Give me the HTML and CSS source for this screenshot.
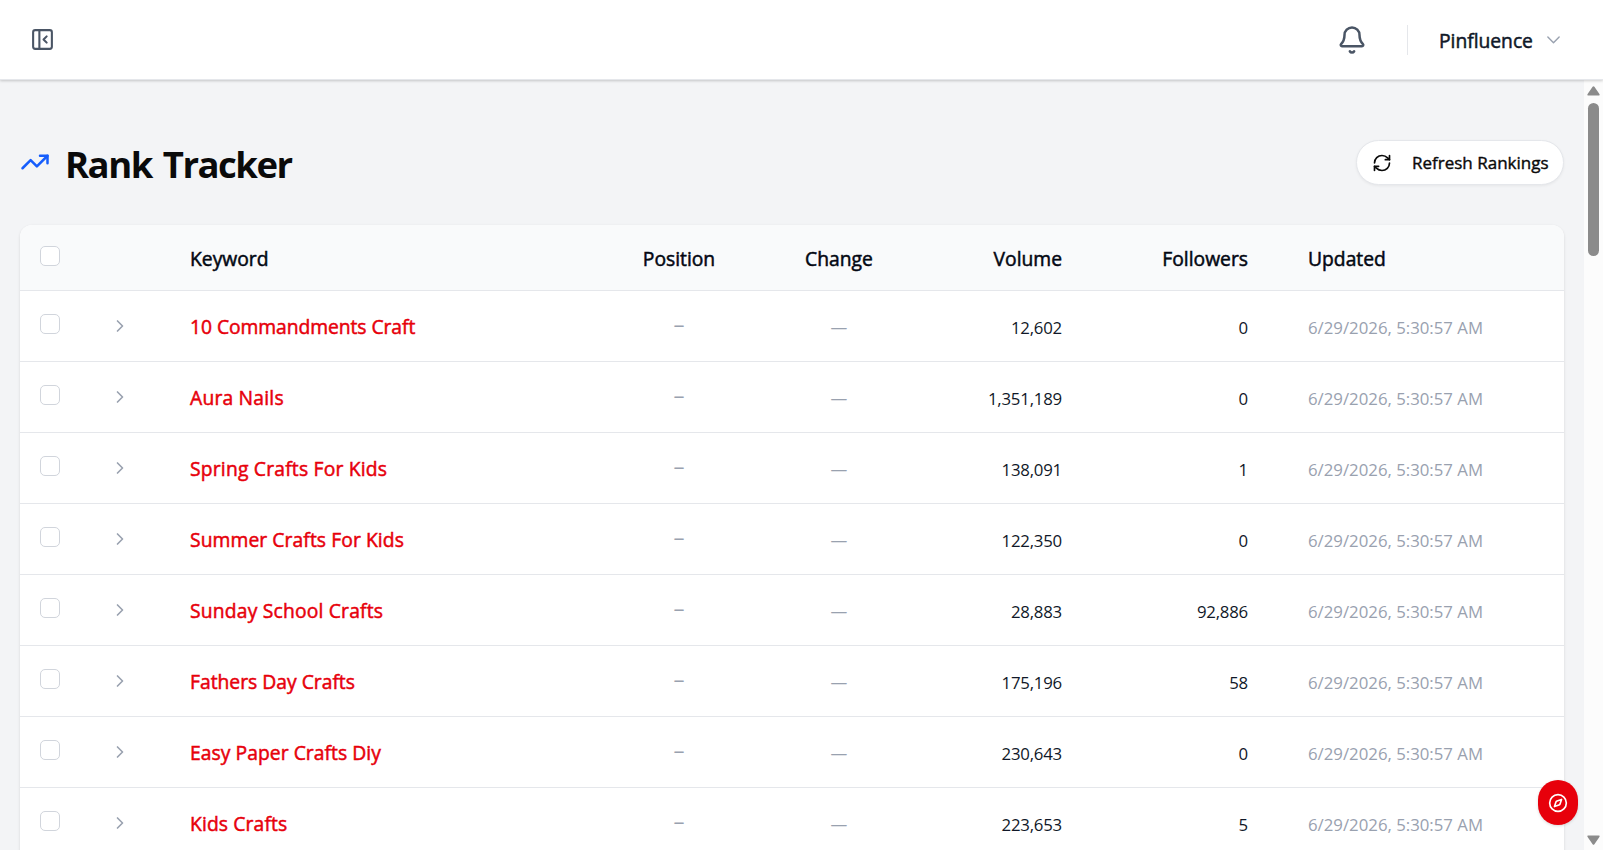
FILE: index.html
```html
<!DOCTYPE html>
<html lang="en">
<head>
<meta charset="utf-8">
<title>Rank Tracker</title>
<link rel="stylesheet" href="styles.css">
</head>
<body>
<header class="topbar">
  <svg class="icon panel-icon" viewBox="0 0 24 24"><rect x="3" y="3" width="18" height="18" rx="2"/><path d="M9 3v18"/><path d="m16 15-3-3 3-3"/></svg>
  <div class="topbar-right">
    <svg class="icon bell-icon" viewBox="0 0 24 24"><path d="M10.268 21a2 2 0 0 0 3.464 0"/><path d="M3.262 15.326A1 1 0 0 0 4 17h16a1 1 0 0 0 .74-1.673C19.41 13.956 18 12.499 18 8A6 6 0 0 0 6 8c0 4.499-1.411 5.956-2.738 7.326"/></svg>
    <span class="divider"></span>
    <span class="account">Pinfluence</span>
    <svg class="icon caret-icon" viewBox="0 0 12 7"><path d="m.8.8 5.2 5.2L11.2.8"/></svg>
  </div>
</header>
<div class="body">
  <main class="main">
    <div class="page-head">
      <svg class="icon trend-icon" viewBox="0 0 24 24"><path d="M16 7h6v6"/><path d="m22 7-8.5 8.5-5-5L2 17"/></svg>
      <h1 class="title">Rank Tracker</h1>
      <button class="refresh">
        <svg class="icon refresh-icon" viewBox="0 0 24 24"><path d="M3 12a9 9 0 0 1 9-9 9.75 9.75 0 0 1 6.74 2.74L21 8"/><path d="M21 3v5h-5"/><path d="M21 12a9 9 0 0 1-9 9 9.75 9.75 0 0 1-6.74-2.74L3 16"/><path d="M8 16H3v5"/></svg>
        <span>Refresh Rankings</span>
      </button>
    </div>
    <section class="card" id="card">
      <div class="row head">
        <span class="check"></span><span></span><span class="kw">Keyword</span><span class="mid">Position</span><span class="mid">Change</span><span class="num">Volume</span><span class="num">Followers</span><span class="upd">Updated</span>
      </div>
    </section>
  </main>
  <div class="scrollbar">
    <svg class="arrow" viewBox="0 0 13 10"><path d="M5.6.8.6 8c-.5.9-.2 1.500.7 1.500h10.400c.9 0 1.200-.6.7-1.500L7.400.8c-.5-.7-1.300-.7-1.800 0z"/></svg>
    <span class="thumb"></span>
    <svg class="arrow down" viewBox="0 0 13 10"><path d="M5.6.8.6 8c-.5.9-.2 1.500.7 1.500h10.400c.9 0 1.200-.6.7-1.500L7.400.8c-.5-.7-1.300-.7-1.800 0z"/></svg>
  </div>
</div>
<button class="fab" aria-label="Explore"><svg class="icon" viewBox="0 0 24 24"><circle cx="12" cy="12" r="10"/><path d="m16.24 7.76-1.804 5.411a2 2 0 0 1-1.265 1.265L7.760 16.240l1.804-5.411a2 2 0 0 1 1.265-1.265z"/></svg></button>
<script src="rows.js"></script>
</body>
</html>
```
FILE: styles.css
```css
* { box-sizing: border-box; }
body {
  margin: 0;
  height: 850px;
  overflow: hidden;
  display: flex;
  flex-direction: column;
  background: #f3f4f6;
  font-family: "Segoe UI", "Open Sans", "Noto Sans", sans-serif;
  color: #030712;
}
.icon {
  display: block;
  flex: none;
  fill: none;
  stroke: currentColor;
  stroke-width: 2;
  stroke-linecap: round;
  stroke-linejoin: round;
}
.topbar {
  position: relative;
  z-index: 1;
  flex: none;
  height: 80px;
  padding: 0 43px 0 30px;
  display: flex;
  align-items: center;
  justify-content: space-between;
  background: #fff;
  border-bottom: 1px solid #e5e7eb;
  box-shadow: 0 1px 3px rgba(0, 0, 0, .12), 0 1px 2px rgba(0, 0, 0, .08);
  color: #4a5565;
}
.panel-icon { width: 25px; height: 25px; }
.topbar-right { display: flex; align-items: center; }
.bell-icon { width: 30px; height: 30px; }
.divider { width: 1px; height: 30px; margin: 0 31px 0 40px; background: #e5e7eb; }
.account {
  width: 94px;
  margin-right: 14px;
  padding-top: 2px;
  font-size: 19.3px;
  line-height: 30px;
  letter-spacing: -.03px;
  -webkit-text-stroke: .5px currentColor;
  color: #101828;
  white-space: nowrap;
}
.caret-icon { width: 13px; height: 8px; stroke-width: 1.3; color: #99a1af; }
.body { flex: 1; min-height: 0; display: flex; }
.main { flex: 1; min-width: 0; padding: 60px 20px 0; overflow: hidden; }
.page-head { display: flex; align-items: center; height: 45px; margin-bottom: 40px; }
.trend-icon { width: 30px; height: 30px; margin: -1px 15px 0 0; color: #155dfc; }
.title {
  margin: 0;
  padding-top: 3px;
  font-size: 36.5px;
  font-weight: 700;
  line-height: 45px;
  letter-spacing: -1.5px;
  word-spacing: 3px;
  color: #0a0a0a;
  white-space: nowrap;
}
.refresh {
  display: flex;
  align-items: center;
  width: 208px;
  height: 45px;
  margin-left: auto;
  padding: 0 0 0 15px;
  gap: 20px;
  border: 1px solid #e5e7eb;
  border-radius: 23px;
  background: #fff;
  box-shadow: 0 1px 3px rgba(0, 0, 0, .06);
  font: 400 17px/25px "Segoe UI", "Open Sans", sans-serif;
  -webkit-text-stroke: .4px currentColor;
  color: #0a0a0a;
  white-space: nowrap;
}
.refresh-icon { width: 20px; height: 20px; }
.card {
  background: #fff;
  border-radius: 12px;
  overflow: hidden;
  height: 660px;
  box-shadow: 0 1px 3px rgba(0, 0, 0, .12);
}
.row {
  display: grid;
  grid-template-columns: 60px 80px 439px 160px 160px 173px 186px 1fr;
  align-items: center;
  height: 71px;
  border-bottom: 1px solid #e5e7eb;
  font-size: 16.8px;
  line-height: 25px;
  color: #101828;
  white-space: nowrap;
}
.row span:not(.check) { padding-top: 2px; }
.row span.term { padding-top: 0; }
.row span.chg { padding-top: 0; }
.row span.pos { padding-top: 0; margin-top: -5px; font-size: 22px; }
.row .num { letter-spacing: -.2px; }
.head {
  height: 66px;
  background: #f9fafb;
  font-size: 19.3px;
  -webkit-text-stroke: .5px currentColor;
  color: #030712;
}
.row.head .num { letter-spacing: 0; }
.row.head span:not(.check) { padding-top: 1px; }
.check {
  width: 20px;
  height: 20px;
  margin: -5px 0 0 20px;
  border: 1px solid #d1d5dc;
  border-radius: 5px;
  background: #fff;
}
.head .check { margin-top: -3px; }
.chevron { width: 20px; height: 20px; margin-left: 30px; color: #99a1af; }
.kw { padding-left: 30px; }
.term { font-size: 19.3px; -webkit-text-stroke: .5px currentColor; color: #e7000b; }
.mid { text-align: center; }
.num { text-align: right; padding-right: 30px; }
.upd { padding-left: 30px; }
.muted { color: #99a1af; }
.scrollbar {
  width: 19px;
  padding: 6px 0 5px;
  display: flex;
  flex-direction: column;
  align-items: center;
  background: #fcfcfc;
}
.arrow { width: 13px; height: 10px; fill: #8b8b8b; }
.thumb { width: 11px; height: 153px; margin-top: 7px; border-radius: 6px; background: #8b8b8b; }
.down { margin-top: auto; transform: rotate(180deg); }
.fab {
  position: fixed;
  right: 25px;
  bottom: 25px;
  width: 40px;
  height: 45px;
  padding: 0;
  display: flex;
  align-items: center;
  justify-content: center;
  border: 0;
  border-radius: 20px;
  background: #e7000b;
  box-shadow: 0 1px 3px rgba(0, 0, 0, .15);
  color: #fff;
}
.fab .icon { width: 20px; height: 20px; }
```
FILE: rows.js
```js
// keyword, volume, followers, keyword tracking in px
const rows = [
  ["10 Commandments Craft", "12,602", "0", -0.06],
  ["Aura Nails", "1,351,189", "0", 0.2],
  ["Spring Crafts For Kids", "138,091", "1", 0.2],
  ["Summer Crafts For Kids", "122,350", "0", 0.08],
  ["Sunday School Crafts", "28,883", "92,886", 0.19],
  ["Fathers Day Crafts", "175,196", "58", 0],
  ["Easy Paper Crafts Diy", "230,643", "0", 0.05],
  ["Kids Crafts", "223,653", "5", 0.13]
];
document.getElementById("card").insertAdjacentHTML("beforeend", rows.map(([term, volume, followers, tracking]) => `
  <div class="row">
    <span class="check"></span>
    <svg class="icon chevron" viewBox="0 0 24 24"><path d="m9 18 6-6-6-6"/></svg>
    <span class="kw term" style="letter-spacing:${tracking}px">${term}</span>
    <span class="mid muted pos">–</span>
    <span class="mid muted chg">—</span>
    <span class="num">${volume}</span>
    <span class="num">${followers}</span>
    <span class="upd muted">6/29/2026, 5:30:57 AM</span>
  </div>`).join(""));
```
